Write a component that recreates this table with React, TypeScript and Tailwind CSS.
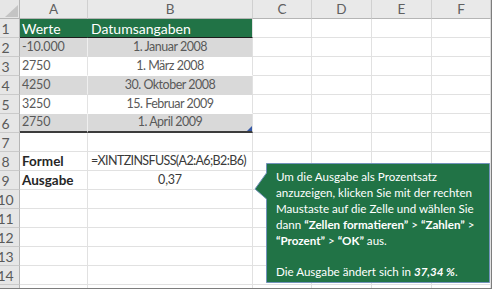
import React from "react";

type Row = {
  n: number;
  a?: React.ReactNode;
  b?: React.ReactNode;
  kind: "head" | "gray" | "white" | "grayLast" | "plain";
  bAlign?: "left" | "center";
};

const num = "text-[12.5px] tracking-[-0.015em]";
const date = "text-[12.5px] tracking-[-0.04em]";

const rows: Row[] = [
  {
    n: 1,
    a: <span className="text-[14px]">Werte</span>,
    b: <span className="text-[14px]">Datumsangaben</span>,
    kind: "head",
    bAlign: "left",
  },
  { n: 2, a: <span className={num}>-10.000</span>, b: <span className={date}>1. Januar 2008</span>, kind: "gray" },
  { n: 3, a: <span className={num}>2750</span>, b: <span className={date}>1. März 2008</span>, kind: "white" },
  { n: 4, a: <span className={num}>4250</span>, b: <span className={date}>30. Oktober 2008</span>, kind: "gray" },
  { n: 5, a: <span className={num}>3250</span>, b: <span className={date}>15. Februar 2009</span>, kind: "white" },
  { n: 6, a: <span className={num}>2750</span>, b: <span className={date}>1. April 2009</span>, kind: "grayLast" },
  { n: 7, kind: "plain" },
  {
    n: 8,
    a: <span className="font-bold text-[13.5px] text-[#262626]">Formel</span>,
    b: <span className="text-[12.5px] tracking-[-0.05em] text-[#3a3a3a]">=XINTZINSFUSS(A2:A6;B2:B6)</span>,
    kind: "plain",
    bAlign: "left",
  },
  {
    n: 9,
    a: <span className="font-bold text-[13.5px] text-[#262626]">Ausgabe</span>,
    b: <span className={`${num} text-[#3a3a3a]`}>0,37</span>,
    kind: "plain",
  },
  { n: 10, kind: "plain" },
  { n: 11, kind: "plain" },
  { n: 12, kind: "plain" },
  { n: 13, kind: "plain" },
  { n: 14, kind: "plain" },
  { n: 15, kind: "plain" },
];

const dataCellA: Record<Row["kind"], string> = {
  head: "bg-[#217346] text-white border-r border-r-[#217346] border-b border-b-[#1c1c1c]",
  gray: "bg-[#d9d9d9] text-[#595959] border-r border-r-[#efefef] border-b border-b-[#d9d9d9]",
  white: "bg-white text-[#595959] border-r border-r-[#e3e3e3] border-b border-b-white",
  grayLast: "bg-[#d9d9d9] text-[#595959] border-r border-r-[#efefef] border-b-2 border-b-[#3c3c3c]",
  plain: "bg-white border-r border-r-[#e1e1e1] border-b border-b-[#e1e1e1]",
};

const dataCellB: Record<Row["kind"], string> = {
  head: "bg-[#217346] text-white border-r border-r-[#e1e1e1] border-b border-b-[#1c1c1c]",
  gray: "bg-[#d9d9d9] text-[#595959] border-r border-r-[#e1e1e1] border-b border-b-[#d9d9d9]",
  white: "bg-white text-[#595959] border-r border-r-[#e1e1e1] border-b border-b-white",
  grayLast: "bg-[#d9d9d9] text-[#595959] border-r border-r-[#e1e1e1] border-b-2 border-b-[#3c3c3c]",
  plain: "bg-white border-r border-r-[#e1e1e1] border-b border-b-[#e1e1e1]",
};

const emptyCell = "bg-white border-r border-r-[#e1e1e1] border-b border-b-[#e1e1e1]";

function CornerCell() {
  return (
    <div className="bg-[#e6e6e6] border-r border-r-[#b5b5b5] border-b border-b-[#b5b5b5] relative">
      <svg width="20" height="19" className="absolute left-0 top-0">
        <polygon points="18,5 18,17 5,17" fill="#c4c4c4" />
      </svg>
    </div>
  );
}

function ColHead({ label }: { label: string }) {
  return (
    <div className="bg-[#e9e9e9] border-r border-r-[#d0d0d0] border-b border-b-[#b5b5b5] flex items-center justify-center text-[13.5px] text-[#606060]">
      {label}
    </div>
  );
}

function RowHead({ n }: { n: number }) {
  return (
    <div className="bg-[#e6e6e6] border-r border-r-[#b5b5b5] border-b border-b-[#cacaca] flex items-center overflow-hidden">
      <div className="w-[11px] flex justify-center text-[14px] text-[#5a5a5a] whitespace-nowrap">{n}</div>
    </div>
  );
}

function CalloutBubble() {
  return (
    <div className="absolute left-[254px] top-[162px] w-[238px] h-[123px]">
      <svg width="238" height="123" className="absolute left-0 top-0">
        <path
          d="M12.5 1.5 H235.5 V120.5 H12.5 V37 L1 27 L12.5 11 Z"
          fill="#217346"
          stroke="#7292bb"
          strokeWidth="1"
        />
      </svg>
      <div className="absolute left-[22px] top-[7px] text-white text-[11.6px] leading-[15.9px] whitespace-nowrap">
        <div>Um die Ausgabe als Prozentsatz</div>
        <div>anzuzeigen, klicken Sie mit der rechten</div>
        <div>Maustaste auf die Zelle und wählen Sie</div>
        <div>
          dann <span className="font-bold">“Zellen formatieren”</span> &gt;{" "}
          <span className="font-bold">“Zahlen”</span> &gt;
        </div>
        <div>
          <span className="font-bold">“Prozent”</span> &gt; <span className="font-bold">“OK”</span> aus.
        </div>
        <div>&nbsp;</div>
        <div>
          Die Ausgabe ändert sich in <span className="font-bold italic">37,34 %</span>.
        </div>
      </div>
    </div>
  );
}

export default function App() {
  return (
    <div className="w-[495px] h-[290px] bg-white overflow-hidden relative font-['Lato',_'Liberation_Sans',_sans-serif]">
      <div className="w-[492px] h-[289px] border-r border-b border-[#7d7d7d] overflow-hidden">
        <div className="grid grid-cols-[20px_68px_165px_59px_60px_60px_59px] auto-rows-[19px]">
          <CornerCell />
          {["A", "B", "C", "D", "E", "F"].map((c) => (
            <ColHead key={c} label={c} />
          ))}
          {rows.map((r) => (
            <React.Fragment key={r.n}>
              <RowHead n={r.n} />
              <div className={`${dataCellA[r.kind]} flex items-center pl-[2px] whitespace-nowrap`}>
                {r.a}
              </div>
              <div
                className={`${dataCellB[r.kind]} relative flex items-center whitespace-nowrap ${
                  r.bAlign === "left" ? "justify-start pl-[3px]" : "justify-center"
                }`}
              >
                {r.b}
                {r.kind === "grayLast" && (
                  <svg width="5" height="5" className="absolute right-0 bottom-0">
                    <polygon points="5,0 5,5 0,5" fill="#3558a6" />
                  </svg>
                )}
              </div>
              <div className={emptyCell} />
              <div className={emptyCell} />
              <div className={emptyCell} />
              <div className={emptyCell} />
            </React.Fragment>
          ))}
        </div>
      </div>
      <CalloutBubble />
    </div>
  );
}
